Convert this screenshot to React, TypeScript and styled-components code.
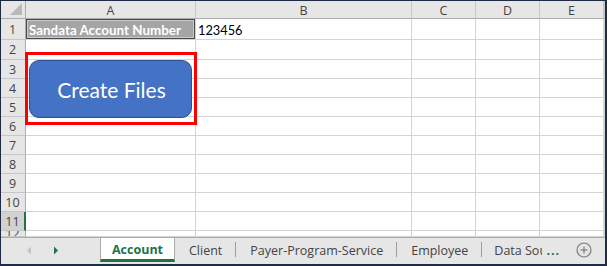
import React from 'react';
import styled, { createGlobalStyle } from 'styled-components';

const COLUMNS = ['A', 'B', 'C', 'D', 'E'];
const ROW_COUNT = 12;
const SELECTED_ROW = 11;

const TABS = ['Client', 'Payer-Program-Service', 'Employee'];

const GlobalStyle = createGlobalStyle`
  html, body {
    margin: 0;
    padding: 0;
    background: #ffffff;
  }
  * {
    box-sizing: border-box;
  }
`;

const App: React.FC = () => {
  const rows = Array.from({ length: ROW_COUNT }, (_, i) => i + 1);

  return (
    <>
      <GlobalStyle />
      <Frame>
        <Sheet>
          <Grid>
            <CornerCell />
            {COLUMNS.map((col) => (
              <ColumnHeader key={col}>{col}</ColumnHeader>
            ))}
            <ColumnHeader />

            {rows.map((row) => (
              <React.Fragment key={row}>
                <RowHeader $selected={row === SELECTED_ROW}>{row}</RowHeader>
                {row === 1 ? (
                  <>
                    <Cell>
                      <CheckCell>Sandata Account Number</CheckCell>
                    </Cell>
                    <Cell>
                      <CellText>123456</CellText>
                    </Cell>
                  </>
                ) : (
                  <>
                    <Cell />
                    <Cell />
                  </>
                )}
                <Cell />
                <Cell />
                <Cell />
                <Cell />
              </React.Fragment>
            ))}
          </Grid>

          <Highlight />
          <CreateButton>Create Files</CreateButton>
        </Sheet>

        <TabBar>
          <TabNav>
            <NavArrow $dir="left" />
            <NavArrow $dir="right" />
          </TabNav>
          <ActiveTab>Account</ActiveTab>
          {TABS.map((tab) => (
            <Tab key={tab}>{tab}</Tab>
          ))}
          <ClippedTab>Data Source</ClippedTab>
          <MoreDots>...</MoreDots>
          <AddSheet>
            <PlusIcon />
          </AddSheet>
        </TabBar>
      </Frame>
    </>
  );
};

// Icons
const PlusIcon = () => (
  <svg width="16" height="16" viewBox="0 0 16 16" fill="none" stroke="#7a7a7a" strokeWidth="1.2">
    <circle cx="8" cy="8" r="7" />
    <line x1="8" y1="4.5" x2="8" y2="11.5" />
    <line x1="4.5" y1="8" x2="11.5" y2="8" />
  </svg>
);

const NavArrow: React.FC<{ $dir: 'left' | 'right' }> = ({ $dir }) => (
  <ArrowBox>
    <svg width="6" height="9" viewBox="0 0 6 9">
      {$dir === 'left' ? (
        <polygon points="5,0.5 5,8.5 1,4.5" fill="#c4c4c4" />
      ) : (
        <polygon points="1,0.5 1,8.5 5,4.5" fill="#217346" />
      )}
    </svg>
  </ArrowBox>
);

// Styled Components
const Frame = styled.div`
  width: 607px;
  height: 266px;
  display: flex;
  flex-direction: column;
  border-style: solid;
  border-color: #1f2b44;
  border-width: 1px 2px 2px 1px;
  overflow: hidden;
  background: #ffffff;
`;

const Sheet = styled.div`
  position: relative;
  height: 236px;
  flex-shrink: 0;
  overflow: hidden;
`;

const Grid = styled.div`
  display: grid;
  grid-template-columns: 25px 170px 216px 64px 64px 64px 1fr;
  grid-template-rows: 18px 21px 20px repeat(9, 19px) 1fr;
  height: 100%;
`;

const HeaderBase = styled.div`
  background: #e6e6e6;
  color: #444444;
  font-family: 'Open Sans', 'Noto Sans', sans-serif;
  font-size: 12.5px;
  display: flex;
  align-items: center;
  justify-content: center;
  overflow: hidden;
`;

const CornerCell = styled(HeaderBase)`
  position: relative;
  border-right: 1px solid #ababab;
  border-bottom: 1px solid #ababab;

  &::after {
    content: '';
    position: absolute;
    right: 3px;
    bottom: 3px;
    width: 12px;
    height: 12px;
    background: #b9b9b9;
    clip-path: polygon(100% 0, 100% 100%, 0 100%);
  }
`;

const ColumnHeader = styled(HeaderBase)`
  border-right: 1px solid #c6c6c6;
  border-bottom: 1px solid #ababab;
  padding-top: 1px;
`;

const RowHeader = styled(HeaderBase)<{ $selected?: boolean }>`
  background: ${(p) => (p.$selected ? '#d2d2d2' : '#e6e6e6')};
  border-bottom: 1px solid #c6c6c6;
  border-right: ${(p) => (p.$selected ? '2px solid #217346' : '1px solid #ababab')};
  padding-right: ${(p) => (p.$selected ? '0' : '1px')};
`;

const Cell = styled.div`
  border-right: 1px solid #d4d4d4;
  border-bottom: 1px solid #d4d4d4;
  display: flex;
  align-items: stretch;
  overflow: hidden;
  min-width: 0;
`;

const CellText = styled.span`
  font-family: 'Lato', 'Liberation Sans', sans-serif;
  font-size: 12.8px;
  color: #000000;
  padding: 2px 0 0 2px;
  display: flex;
  align-items: center;
`;

const CheckCell = styled.div`
  flex: 1;
  background: #a5a5a5;
  border: 1px solid #4a4a4a;
  box-shadow: inset 0 0 0 1px #c9c9c9;
  color: #ffffff;
  font-family: 'Lato', 'Liberation Sans', sans-serif;
  font-weight: 700;
  font-size: 13.4px;
  white-space: nowrap;
  display: flex;
  align-items: center;
  padding: 1px 0 0 2px;
`;

const Highlight = styled.div`
  position: absolute;
  left: 24px;
  top: 51px;
  width: 172px;
  height: 73px;
  border: 3px solid #ff0000;
  pointer-events: none;
`;

const CreateButton = styled.div`
  position: absolute;
  left: 28px;
  top: 59px;
  width: 163px;
  height: 58px;
  background: #4472c4;
  border: 1px solid #2f528f;
  border-radius: 10px;
  color: #ffffff;
  font-family: 'Lato', 'Open Sans', sans-serif;
  font-size: 21px;
  display: flex;
  align-items: center;
  justify-content: center;
  padding-left: 2px;
  cursor: pointer;
`;

const TabBar = styled.div`
  height: 27px;
  display: flex;
  align-items: flex-start;
  background: #e6e6e6;
  border-top: 1px solid #ababab;
  font-family: 'Open Sans', 'Noto Sans', sans-serif;
  font-size: 12.5px;
  color: #444444;
`;

const TabNav = styled.div`
  width: 99px;
  height: 24px;
  display: flex;
  align-items: center;
  padding-left: 25px;
  gap: 21px;
`;

const ArrowBox = styled.span`
  display: flex;
  align-items: center;
`;

const ActiveTab = styled.div`
  width: 75px;
  height: 24px;
  background: #ffffff;
  border-left: 1px solid #ababab;
  border-right: 1px solid #ababab;
  border-bottom: 3px solid #217346;
  color: #217346;
  font-weight: 700;
  display: flex;
  align-items: center;
  justify-content: center;
  padding-top: 2px;
`;

const Tab = styled.div`
  position: relative;
  height: 24px;
  padding: 0 14px;
  display: flex;
  align-items: center;
  white-space: nowrap;

  &::after {
    content: '';
    position: absolute;
    right: 0;
    top: 4px;
    height: 15px;
    width: 1px;
    background: #9c9c9c;
  }
`;

const ClippedTab = styled.div`
  width: 60px;
  height: 24px;
  padding-left: 12px;
  display: flex;
  align-items: center;
  white-space: nowrap;
  overflow: hidden;
  flex-shrink: 0;
`;

const MoreDots = styled.div`
  height: 24px;
  width: 22px;
  display: flex;
  align-items: center;
  justify-content: center;
  color: #217346;
  font-weight: 700;
  letter-spacing: 1px;
  flex-shrink: 0;
`;

const AddSheet = styled.div`
  height: 24px;
  margin-left: 12px;
  display: flex;
  align-items: center;
`;

export default App;
